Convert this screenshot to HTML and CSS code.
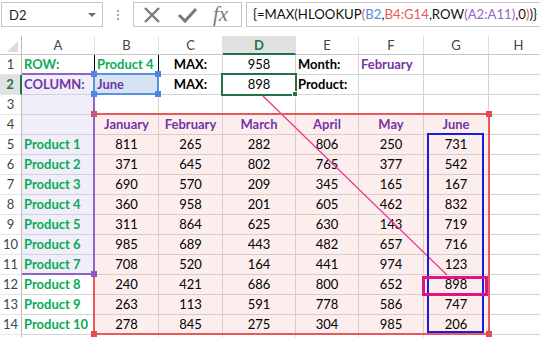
FILE: index.html
```html
<!DOCTYPE html>
<html lang="en">
  <head>
    <meta charset="UTF-8" />
    <meta name="viewport" content="width=device-width, initial-scale=1.0" />
    <title>HLOOKUP with MAX</title>
    <link rel="stylesheet" href="styles.css">
  </head>
  <body>
    <div class="formula-bar">
      <div class="name-box">
        <span>D2</span>
        <span class="caret"></span>
      </div>
      <div class="grip"><i></i><i></i><i></i></div>
      <div class="buttons">
        <svg width="18" height="18" viewBox="0 0 18 18"><path d="M2 2 L16 16 M16 2 L2 16" stroke-width="2.4" /></svg>
        <svg width="20" height="18" viewBox="0 0 20 18"><path d="M2 9 L8 15 L19 3" stroke-width="3" /></svg>
        <span class="fx">fx</span>
      </div>
      <div class="formula">{=MAX(HLOOKUP<span class="ref-red">(</span><span class="ref-blue">B2</span>,<span class="ref-red">B4:G14</span>,ROW<span class="ref-purple">(A2:A11)</span>,0<span class="ref-red">)</span>)}</div>
    </div>

    <div class="sheet">
      <div class="grid">
        <!-- column headers -->
        <div class="corner"><span class="tri"></span></div>
        <div class="ch">A</div><div class="ch">B</div><div class="ch">C</div><div class="ch on">D</div><div class="ch">E</div><div class="ch">F</div><div class="ch">G</div><div class="ch">H</div>

        <div class="rh">1</div><div class="l g bk">ROW:</div><div class="l g bk">Product 4</div><div class="b">MAX:</div><div>958</div><div class="l b">Month:</div><div class="l p">February</div><div></div><div></div>
        <div class="rh on">2</div><div class="l p fp">COLUMN:</div><div class="l p fb">June</div><div class="b">MAX:</div><div>898</div><div class="l b">Product:</div><div></div><div></div><div></div>
        <div class="rh">3</div><div class="fp"></div><div></div><div></div><div></div><div></div><div></div><div></div><div></div>
        <div class="rh">4</div><div class="fp"></div><div class="p fr">January</div><div class="p fr">February</div><div class="p fr">March</div><div class="p fr">April</div><div class="p fr">May</div><div class="p fr">June</div><div></div>

        <div class="rh">5</div><div class="l g fp">Product 1</div><div class="fr">811</div><div class="fr">265</div><div class="fr">282</div><div class="fr">806</div><div class="fr">250</div><div class="fr">731</div><div></div>
        <div class="rh">6</div><div class="l g fp">Product 2</div><div class="fr">371</div><div class="fr">645</div><div class="fr">802</div><div class="fr">765</div><div class="fr">377</div><div class="fr">542</div><div></div>
        <div class="rh">7</div><div class="l g fp">Product 3</div><div class="fr">690</div><div class="fr">570</div><div class="fr">209</div><div class="fr">345</div><div class="fr">165</div><div class="fr">167</div><div></div>
        <div class="rh">8</div><div class="l g fp">Product 4</div><div class="fr">360</div><div class="fr">958</div><div class="fr">201</div><div class="fr">605</div><div class="fr">462</div><div class="fr">832</div><div></div>
        <div class="rh">9</div><div class="l g fp">Product 5</div><div class="fr">311</div><div class="fr">864</div><div class="fr">625</div><div class="fr">630</div><div class="fr">143</div><div class="fr">719</div><div></div>
        <div class="rh">10</div><div class="l g fp">Product 6</div><div class="fr">985</div><div class="fr">689</div><div class="fr">443</div><div class="fr">482</div><div class="fr">657</div><div class="fr">716</div><div></div>
        <div class="rh">11</div><div class="l g fp">Product 7</div><div class="fr">708</div><div class="fr">520</div><div class="fr">164</div><div class="fr">441</div><div class="fr">974</div><div class="fr">123</div><div></div>
        <div class="rh">12</div><div class="l g">Product 8</div><div class="fr">240</div><div class="fr">421</div><div class="fr">686</div><div class="fr">800</div><div class="fr">652</div><div class="fr">898</div><div></div>
        <div class="rh">13</div><div class="l g">Product 9</div><div class="fr">263</div><div class="fr">113</div><div class="fr">591</div><div class="fr">778</div><div class="fr">586</div><div class="fr">747</div><div></div>
        <div class="rh">14</div><div class="l g">Product 10</div><div class="fr">278</div><div class="fr">845</div><div class="fr">275</div><div class="fr">304</div><div class="fr">985</div><div class="fr">206</div><div></div>
        <div class="rh"></div><div></div><div></div><div></div><div></div><div></div><div></div><div></div><div></div>
      </div>

      <!-- things drawn over the cells -->
      <svg class="arrow" width="540" height="301"><line x1="263" y1="60" x2="447" y2="239" /></svg>

      <div class="range range-red">
        <span class="handle tl"></span><span class="handle tr"></span>
        <span class="handle bl"></span><span class="handle br"></span>
      </div>
      <div class="range range-purple">
        <span class="handle tr"></span><span class="handle br"></span>
      </div>
      <div class="range range-blue">
        <span class="handle tl"></span><span class="handle tr"></span>
        <span class="handle bl"></span><span class="handle br"></span>
      </div>
      <div class="selection"><span class="fill-handle"></span></div>

      <div class="shape-column"></div>
      <div class="shape-result"></div>
    </div>
  </body>
</html>
```

FILE: styles.css
```css
* {
  box-sizing: border-box;
}

body {
  margin: 0;
  width: 540px;
  height: 337px;
  overflow: hidden;
  background-color: #fff;
  font-family: 'Lato', 'Liberation Sans', sans-serif;
  font-size: 13px;
  color: #000;
}

/* formula bar */
.formula-bar {
  display: flex;
  height: 36px;
  padding: 2px 0 0 1px;
}

.name-box {
  display: flex;
  align-items: center;
  width: 102px;
  height: 25px;
  padding: 0 6px 0 7px;
  border: 1px solid #c6c6c6;
  color: #222;
}

.caret {
  margin-left: auto;
  border-left: 4px solid transparent;
  border-right: 4px solid transparent;
  border-top: 4px solid #6d6d6d;
}

.grip {
  display: flex;
  flex-direction: column;
  align-items: center;
  justify-content: center;
  gap: 2px;
  width: 30px;
  height: 25px;
}

.grip i {
  width: 2px;
  height: 2px;
  background-color: #a8a8a8;
}

.buttons {
  display: flex;
  align-items: center;
  gap: 16px;
  width: 109px;
  height: 25px;
  padding-left: 9px;
  border: 1px solid #c6c6c6;
}

.buttons svg {
  stroke: #7a7a7a;
  fill: none;
}

.fx {
  font-family: 'Liberation Serif', serif;
  font-style: italic;
  font-size: 21px;
  color: #7a7a7a;
}

.formula {
  flex: 1;
  height: 25px;
  margin-left: 4px;
  margin-right: -20px;
  padding-left: 6px;
  border: 1px solid #c6c6c6;
  font-size: 13.2px;
  line-height: 23px;
  white-space: nowrap;
  color: #111;
}

.ref-red {
  color: #e8585b;
}

.ref-blue {
  color: #4f8ee2;
}

.ref-purple {
  color: #9467cb;
}

/* sheet */
.sheet {
  position: relative;
}

.grid {
  display: grid;
  grid-template-columns: 22px 73px 64px 64px 73px 63px 65px 65px 60px;
  grid-template-rows: 19px;
  grid-auto-rows: 20px;
}

.grid > div {
  border-right: 1px solid #d4d4d4;
  border-bottom: 1px solid #d4d4d4;
  line-height: 19px;
  text-align: center;
  white-space: nowrap;
  overflow: hidden;
}

.grid > .corner {
  display: flex;
  align-items: flex-end;
  justify-content: flex-end;
  padding: 0 3px 2px 0;
  border-right-color: #bababa;
  border-bottom-color: #c6c6c6;
}

.tri {
  border-left: 11px solid transparent;
  border-bottom: 11px solid #dcdcdc;
}

.grid > .ch {
  line-height: 18px;
  color: #444;
  border-right-color: #dedede;
  border-bottom-color: #c6c6c6;
}

.grid > .ch.on {
  background-color: #e1e1e1;
  color: #217346;
  font-weight: bold;
  border-bottom: 2px solid #217346;
}

.grid > .rh {
  color: #444;
  border-right-color: #bababa;
  border-bottom-color: #e6e6e6;
}

.grid > .rh.on {
  background-color: #e1e1e1;
  color: #217346;
  font-weight: bold;
  border-right: 2px solid #217346;
}

.grid > .l {
  text-align: left;
  padding-left: 2px;
}

.g {
  color: #0aab55;
  font-weight: bold;
}

.p {
  color: #7334a6;
  font-weight: bold;
}

.b {
  font-weight: bold;
}

.grid > .bk {
  border-right-color: #000;
}

.grid > .fr {
  background-color: #fdeeee;
  border-color: #dccaca;
}

.grid > .fp {
  background-color: #f0eef8;
  border-color: #d3cee0;
}

.grid > .fb {
  background-color: #d6e4f5;
}

/* overlays */
.arrow {
  position: absolute;
  left: 0;
  top: 0;
}

.arrow line {
  stroke: #ec2c93;
  stroke-width: 1.2;
}

.range {
  position: absolute;
  border: 2px solid;
}

.range-red {
  left: 93px;
  top: 77px;
  width: 397px;
  height: 222px;
  border-color: #e8595b;
}

.range-purple {
  left: 22px;
  top: 37px;
  width: 73px;
  height: 202px;
  border-color: #9262c9;
  border-left: none;
}

.range-blue {
  left: 93px;
  top: 37px;
  width: 66px;
  height: 22px;
  border-color: #5b8fe3;
}

.handle {
  position: absolute;
  width: 6px;
  height: 6px;
}

.range-red .handle {
  background-color: #e54b4e;
}

.range-purple .handle {
  background-color: #8a58c4;
}

.range-blue .handle {
  background-color: #5187e0;
}

.tl { left: -4px; top: -4px; }
.tr { right: -4px; top: -4px; }
.bl { left: -4px; bottom: -4px; }
.br { right: -4px; bottom: -4px; }

.selection {
  position: absolute;
  left: 221px;
  top: 37px;
  width: 76px;
  height: 23px;
  border: 2px solid #217346;
}

.fill-handle {
  position: absolute;
  right: -3px;
  bottom: -3px;
  width: 6px;
  height: 6px;
  background-color: #217346;
  border: 1px solid #fff;
}

.shape-column {
  position: absolute;
  left: 427px;
  top: 97px;
  width: 57px;
  height: 200px;
  border: 2px solid #1c1ce0;
}

.shape-result {
  position: absolute;
  left: 422px;
  top: 240px;
  width: 66px;
  height: 20px;
  border: 3px solid #e3147f;
}
```
